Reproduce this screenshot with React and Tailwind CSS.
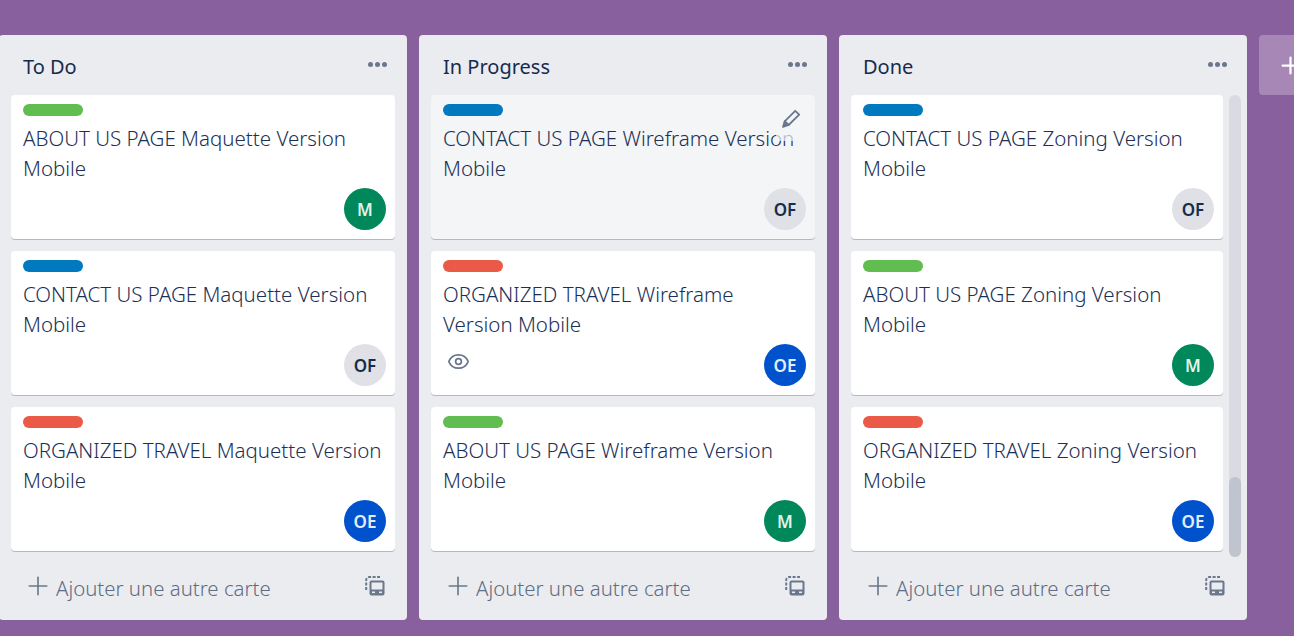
import React from 'react';
import { Eye, Plus } from 'lucide-react';

const labelColors = {
  green: 'bg-[#61bd4f]',
  blue: 'bg-[#0079bf]',
  red: 'bg-[#eb5a46]',
};

const avatars = {
  M: 'bg-[#00875a] text-[#e4f3ed]',
  OF: 'bg-[#dfe1e6] text-[#172b4d]',
  OE: 'bg-[#0052cc] text-[#e4ecfa]',
};

const columns = [
  {
    title: 'To Do',
    cards: [
      { label: 'green', text: 'ABOUT US PAGE Maquette Version Mobile', member: 'M' },
      { label: 'blue', text: 'CONTACT US PAGE Maquette Version Mobile', member: 'OF' },
      { label: 'red', text: 'ORGANIZED TRAVEL Maquette Version Mobile', member: 'OE' },
    ],
  },
  {
    title: 'In Progress',
    cards: [
      { label: 'blue', text: 'CONTACT US PAGE Wireframe Version Mobile', member: 'OF', hovered: true },
      { label: 'red', text: 'ORGANIZED TRAVEL Wireframe Version Mobile', member: 'OE', watched: true },
      { label: 'green', text: 'ABOUT US PAGE Wireframe Version Mobile', member: 'M' },
    ],
  },
  {
    title: 'Done',
    scroll: true,
    cards: [
      { label: 'blue', text: 'CONTACT US PAGE Zoning Version Mobile', member: 'OF' },
      { label: 'green', text: 'ABOUT US PAGE Zoning Version Mobile', member: 'M' },
      { label: 'red', text: 'ORGANIZED TRAVEL Zoning Version Mobile', member: 'OE' },
    ],
  },
];

const PencilIcon = () => (
  <svg width="20" height="20" viewBox="0 0 20 20" fill="none" stroke="#6b778c" strokeWidth="1.8" strokeLinejoin="round">
    <path d="M14.2 1.8l4 3.8-10.6 10.4-3.9-3.7z" />
    <path d="M3.7 12.3l-1.7 5.7 5.6-2z" fill="#6b778c" />
  </svg>
);

const TemplateIcon = () => (
  <svg width="20" height="20" viewBox="0 0 20 20" fill="none">
    <path d="M1.2 14V4a3 3 0 0 1 3-3H15" stroke="#6b778c" strokeWidth="2" strokeDasharray="3 1.5" />
    <rect x="4.5" y="4.5" width="15" height="15" rx="2" fill="#6b778c" />
    <rect x="6.5" y="6.5" width="11" height="7" fill="#ebecf0" />
    <rect x="7" y="15.5" width="3" height="1.6" fill="#ebecf0" />
    <rect x="14" y="15.5" width="3" height="1.6" fill="#ebecf0" />
  </svg>
);

const Card = ({ card }) => (
  <div className={`relative rounded-[4px] pt-[9px] pb-[9px] pl-3 pr-[9px] shadow-[0_1px_0_#091e4240] h-[144px] shrink-0 ${card.hovered ? 'bg-[#f4f5f7]' : 'bg-white'}`}>
    <div className={`w-[60px] h-3 rounded-md ${labelColors[card.label]}`}></div>
    <p className="mt-[7px] text-[20.5px] leading-[30px] font-light text-[#1b3056]">{card.text}</p>
    <div className="flex justify-between items-start mt-[5px]">
      <div className="pl-[4px] pt-[6px] h-[42px]">
        {card.watched && <Eye size={23} strokeWidth={1.8} className="text-[#6b778c]" />}
      </div>
      <div className={`w-[42px] h-[42px] rounded-full flex items-center justify-center font-semibold text-[17px] pt-[2px] ${avatars[card.member]}`}>
        {card.member}
      </div>
    </div>
    {card.hovered && (
      <div className="absolute right-[9px] top-[8px] w-[30px] h-[38px] rounded-[4px] bg-[#f4f5f7b3] flex justify-center pt-[6px]">
        <PencilIcon />
      </div>
    )}
  </div>
);

const Column = ({ column }) => (
  <div className="w-[408px] h-[585px] shrink-0 rounded-[4px] bg-[#ebecf0] flex flex-col">
    <div className="h-[60px] flex justify-between pl-6 pr-5 shrink-0">
      <h2 className="text-[20px] leading-[28px] mt-[18px] text-[#172b4d]">{column.title}</h2>
      <div className="flex gap-[2px] mt-[27px] h-[5px]">
        <span className="w-[5px] h-[5px] rounded-full bg-[#6b778c]"></span>
        <span className="w-[5px] h-[5px] rounded-full bg-[#6b778c]"></span>
        <span className="w-[5px] h-[5px] rounded-full bg-[#6b778c]"></span>
      </div>
    </div>
    <div className="flex h-[462px] pl-3 shrink-0">
      <div className={`flex flex-col gap-3 ${column.scroll ? 'w-[372px]' : 'w-[384px]'}`}>
        {column.cards.map((card) => (
          <Card key={card.text} card={card} />
        ))}
      </div>
      {column.scroll && (
        <div className="ml-[6px] w-3 h-full rounded-md bg-[#dadbe2] flex flex-col justify-end">
          <div className="h-20 rounded-md bg-[#bfc4ce]"></div>
        </div>
      )}
    </div>
    <div className="flex-1 flex items-start justify-between pl-6 pr-[22px] pt-[15px] text-[#5e6c84]">
      <div className="flex items-center gap-[3px] h-[32px]">
        <Plus size={30} strokeWidth={1.3} className="text-[#6b778c] mb-[4px]" />
        <span className="text-[20.4px] leading-[30px] font-light">Ajouter une autre carte</span>
      </div>
      <div className="pt-[4px]">
        <TemplateIcon />
      </div>
    </div>
  </div>
);

export default function App() {
  return (
    <div className="h-screen w-full overflow-hidden bg-[#89609e] pt-[35px] flex gap-3 font-['Noto_Sans','Open_Sans',sans-serif]">
      <div className="flex gap-3 -ml-px shrink-0">
        {columns.map((column) => (
          <Column key={column.title} column={column} />
        ))}
      </div>
      <div className="w-[408px] h-[60px] shrink-0 rounded-[4px] bg-[#a687b5] flex items-center pl-[18px] text-white">
        <Plus size={27} strokeWidth={2} />
      </div>
    </div>
  );
}
